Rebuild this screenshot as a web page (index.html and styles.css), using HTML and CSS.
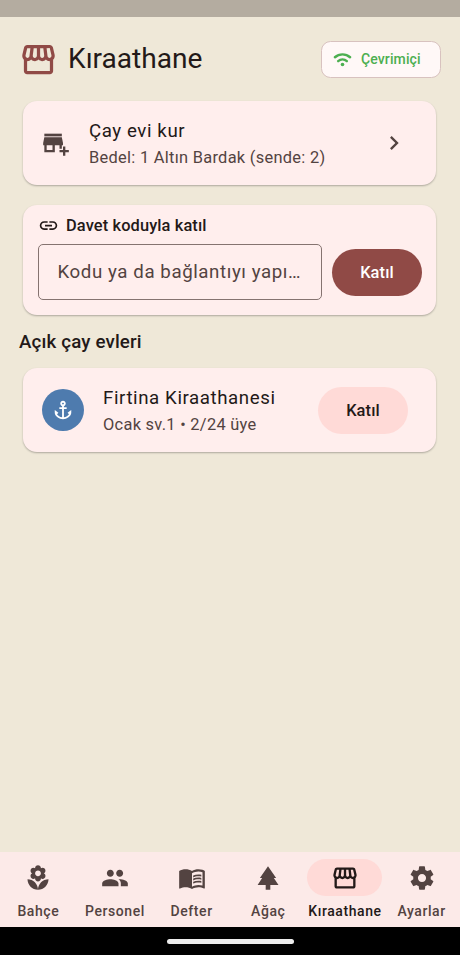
FILE: index.html
```html
<!DOCTYPE html>
<html lang="tr">
<head>
<meta charset="utf-8">
<meta name="viewport" content="width=device-width, initial-scale=1">
<title>Kıraathane</title>
<link rel="stylesheet" href="styles.css">
</head>
<body>
<svg class="defs" width="0" height="0">
  <symbol id="store" viewBox="0 0 24 24"><path d="M21.9 8.89l-1.05-4.37c-.22-.9-1-1.52-1.91-1.52H5.05c-.9 0-1.69.63-1.9 1.52L2.1 8.89c-.24 1.02-.02 2.06.62 2.88.08.11.19.19.28.29V19c0 1.1.9 2 2 2h14c1.1 0 2-.9 2-2v-6.94c.09-.09.2-.18.28-.28.64-.82.87-1.87.62-2.89zm-2.99-3.9l1.05 4.37c.1.42.01.84-.25 1.17-.14.18-.44.47-.94.47-.61 0-1.14-.49-1.21-1.14L16.98 5l1.93-.01zM13 5h1.96l.54 4.52c.05.39-.07.78-.33 1.07-.22.26-.54.41-.95.41-.67 0-1.22-.59-1.22-1.31V5zM8.49 9.52L9.04 5H11v4.69c0 .72-.55 1.31-1.29 1.31-.34 0-.65-.15-.89-.41-.25-.29-.37-.68-.33-1.07zm-4.45-.16L5.05 5h1.97l-.58 4.86c-.08.65-.6 1.14-1.21 1.14-.49 0-.8-.29-.93-.47-.27-.32-.36-.75-.26-1.17zM5 19v-6.03c.08.01.15.03.23.03.87 0 1.66-.36 2.24-.95.6.6 1.4.95 2.31.95.87 0 1.65-.36 2.23-.93.59.57 1.39.93 2.29.93.84 0 1.64-.35 2.24-.95.58.59 1.37.95 2.24.95.08 0 .15-.02.23-.03V19H5z"/></symbol>
</svg>
<div class="status"></div>
<main class="page">
  <header class="header">
    <svg class="header-icon"><use href="#store"/></svg>
    <h1>Kıraathane</h1>
    <div class="chip">
      <svg class="chip-icon" viewBox="0 0 24 24"><path d="M2.400 9.200C7.900 4.300 16.100 4.300 21.600 9.200M6.500 14c3.200-2.700 7.800-2.700 11 0" fill="none" stroke="currentColor" stroke-width="3.100" stroke-linecap="round"/><circle cx="12" cy="18.300" r="2.300"/></svg>
      <span>Çevrimiçi</span>
    </div>
  </header>
  <section class="card tile">
    <svg class="icon" viewBox="0 0 24 24"><path d="M15 17h2v-3h1v-2l-1-5H2l-1 5v2h1v6h9v-6h4v3zm-6 1H4v-4h5v4z"/><path d="M2 4h15v2H2z"/><path d="M2 6h15v1H2z" opacity=".35"/><path d="M20 18v-3h-2v3h-3v2h3v3h2v-3h3v-2z"/></svg>
    <div class="tile-text">
      <div class="title">Çay evi kur</div>
      <div class="subtitle">Bedel: 1 Altın Bardak (sende: 2)</div>
    </div>
    <svg class="icon chevron" viewBox="0 0 24 24"><path d="M10 6L8.590 7.410 13.170 12l-4.580 4.590L10 18l6-6z"/></svg>
  </section>
  <section class="card invite">
    <div class="invite-head">
      <svg class="link-icon" viewBox="0 0 24 24"><path d="M3.900 12c0-1.710 1.390-3.100 3.100-3.100h4V7H7c-2.760 0-5 2.240-5 5s2.240 5 5 5h4v-1.900H7c-1.710 0-3.100-1.390-3.100-3.100zM8 13h8v-2H8v2zm9-6h-4v1.900h4c1.710 0 3.100 1.390 3.100 3.100s-1.390 3.100-3.100 3.100h-4V17h4c2.760 0 5-2.240 5-5s-2.240-5-5-5z"/></svg>
      <span>Davet koduyla katıl</span>
    </div>
    <div class="invite-row">
      <div class="field">Kodu ya da bağlantıyı yapı…</div>
      <button class="btn primary">Katıl</button>
    </div>
  </section>
  <h2>Açık çay evleri</h2>
  <section class="card tile house">
    <div class="avatar"><svg viewBox="0 0 24 24"><path d="M17 15l1.550 1.550c-.96 1.690-3.330 3.040-5.550 3.370V11h3V9h-3V7.820C14.160 7.400 15 6.300 15 5c0-1.650-1.350-3-3-3S9 3.350 9 5c0 1.300.84 2.400 2 2.820V9H8v2h3v8.920c-2.220-.33-4.590-1.680-5.550-3.370L7 15l-4-3v3c0 3.880 4.920 7 9 7s9-3.120 9-7v-3l-4 3zM12 4c.55 0 1 .45 1 1s-.45 1-1 1-1-.45-1-1 .45-1 1-1z"/></svg></div>
    <div class="tile-text">
      <div class="title">Firtina Kiraathanesi</div>
      <div class="subtitle">Ocak sv.1 • 2/24 üye</div>
    </div>
    <button class="btn tonal">Katıl</button>
  </section>
</main>
<nav class="nav">
  <div class="item"><span class="pill"><svg class="icon" viewBox="0 0 24 24"><path d="M12 22c4.970 0 9-4.030 9-9-4.970 0-9 4.030-9 9zM5.600 10.250c0 1.380 1.120 2.500 2.500 2.500.53 0 1.010-.16 1.420-.44l-.02.19c0 1.380 1.120 2.500 2.500 2.500s2.500-1.120 2.500-2.500l-.02-.19c.4.28.89.44 1.420.44 1.380 0 2.500-1.120 2.500-2.500 0-1-.59-1.850-1.430-2.250.84-.4 1.430-1.250 1.430-2.250 0-1.380-1.120-2.500-2.500-2.500-.53 0-1.010.16-1.420.44l.02-.19C14.500 2.120 13.380 1 12 1S9.500 2.120 9.500 3.500l.02.19c-.4-.28-.89-.44-1.420-.44-1.380 0-2.500 1.120-2.500 2.500 0 1 .59 1.850 1.430 2.250-.84.4-1.430 1.250-1.430 2.250zM12 5.500c1.380 0 2.500 1.120 2.500 2.500s-1.120 2.500-2.500 2.500S9.500 9.380 9.500 8s1.120-2.500 2.500-2.500zM3 13c0 4.970 4.030 9 9 9 0-4.970-4.030-9-9-9z"/></svg></span><span>Bahçe</span></div>
  <div class="item"><span class="pill"><svg class="icon" viewBox="0 0 24 24"><path d="M16 11c1.660 0 2.990-1.340 2.990-3S17.660 5 16 5c-1.660 0-3 1.340-3 3s1.340 3 3 3zm-8 0c1.660 0 2.990-1.340 2.990-3S9.660 5 8 5C6.340 5 5 6.340 5 8s1.340 3 3 3zm0 2c-2.330 0-7 1.170-7 3.500V19h14v-2.500c0-2.330-4.670-3.500-7-3.500zm8 0c-.29 0-.62.02-.97.05 1.160.84 1.970 1.970 1.970 3.450V19h6v-2.500c0-2.330-4.670-3.500-7-3.500z"/></svg></span><span>Personel</span></div>
  <div class="item"><span class="pill"><svg class="icon" viewBox="0 0 24 24"><path d="M21 5c-1.110-.35-2.330-.5-3.500-.5-1.950 0-4.050.4-5.500 1.500-1.450-1.100-3.550-1.500-5.500-1.500S2.450 4.900 1 6v14.650c0 .25.25.5.5.5.1 0 .15-.05.25-.05C3.100 20.450 5.050 20 6.500 20c1.950 0 4.050.4 5.500 1.500 1.350-.85 3.800-1.500 5.500-1.500 1.650 0 3.350.3 4.750 1.050.1.05.15.05.25.05.25 0 .5-.25.5-.5V6c-.6-.45-1.250-.75-2-1zm0 13.500c-1.100-.35-2.300-.5-3.500-.5-1.700 0-4.150.65-5.500 1.500V8c1.350-.85 3.800-1.500 5.500-1.500 1.200 0 2.400.15 3.500.5v11.500z"/><path d="M17.500 10.500c.88 0 1.730.09 2.500.26V9.240c-.79-.15-1.640-.24-2.500-.24-1.700 0-3.240.29-4.500.83v1.660c1.130-.64 2.700-.99 4.500-.99zM13 12.490v1.660c1.130-.64 2.700-.99 4.500-.99.88 0 1.730.09 2.500.26V11.900c-.79-.15-1.640-.24-2.500-.24-1.700 0-3.240.3-4.500.83zM17.500 14.330c-1.700 0-3.240.29-4.500.83v1.660c1.130-.64 2.700-.99 4.500-.99.88 0 1.730.09 2.500.26v-1.520c-.79-.16-1.640-.24-2.500-.24z"/></svg></span><span>Defter</span></div>
  <div class="item"><span class="pill"><svg class="icon" viewBox="0 0 24 24"><path d="M17 12h2L12 2 5.050 12H7l-3.900 6h6.920v4h3.960v-4H21z"/></svg></span><span>Ağaç</span></div>
  <div class="item active"><span class="pill"><svg class="icon"><use href="#store"/></svg></span><span>Kıraathane</span></div>
  <div class="item"><span class="pill"><svg class="icon" viewBox="0 0 24 24"><path d="M19.430 12.980c.04-.32.07-.64.07-.98s-.03-.66-.07-.98l2.110-1.650c.19-.15.24-.42.12-.64l-2-3.460c-.12-.22-.39-.3-.61-.22l-2.490 1c-.52-.4-1.080-.73-1.690-.98l-.38-2.650C14.460 2.180 14.250 2 14 2h-4c-.25 0-.46.18-.49.42l-.38 2.650c-.61.25-1.170.59-1.690.98l-2.490-1c-.23-.09-.49 0-.61.22l-2 3.460c-.13.22-.07.49.12.64l2.110 1.650c-.04.32-.07.65-.07.98s.03.66.07.98l-2.110 1.650c-.19.15-.24.42-.12.64l2 3.460c.12.22.39.3.61.22l2.490-1c.52.4 1.080.73 1.690.98l.38 2.650c.03.24.24.42.49.42h4c.25 0 .46-.18.49-.42l.38-2.650c.61-.25 1.170-.59 1.690-.98l2.490 1c.23.09.49 0 .61-.22l2-3.460c.12-.22.07-.49-.12-.64l-2.110-1.650zM12 15.500c-1.930 0-3.500-1.570-3.500-3.500s1.570-3.500 3.500-3.500 3.500 1.570 3.500 3.500-1.570 3.500-3.500 3.500z"/></svg></span><span>Ayarlar</span></div>
</nav>
<div class="gesture"><span></span></div>
</body>
</html>
```
FILE: styles.css
```css
* { box-sizing: border-box; }
body {
  margin: 0;
  height: 955px;
  display: flex;
  flex-direction: column;
  overflow: hidden;
  background: #efe8d8;
  color: #231918;
  font-family: Roboto, "Liberation Sans", sans-serif;
}
.defs { position: absolute; }
svg { fill: currentColor; flex: none; display: block; }
h1, h2 { margin: 0; }
.status { height: 17px; background: #b4aca0; flex: none; }
.page { flex: 1; padding: 24px 19px 0; }
.header { display: flex; align-items: center; height: 36px; }
.header-icon { width: 39px; height: 39px; color: #904a46; }
h1 { flex: 1; margin-left: 10px; font-size: 28.1px; font-weight: 400; line-height: 36px; }
.chip {
  display: flex;
  align-items: center;
  width: 120px;
  height: 37px;
  padding-left: 11px;
  gap: 9px;
  border: 1px solid #d8c2bf;
  border-radius: 9.500px;
  background: #fff8f7;
  color: #4caf50;
  font-size: 14px;
  font-weight: 500;
  letter-spacing: .12px;
}
.chip-icon { width: 19px; height: 19px; }
.card {
  margin: 0 5px 0 4px;
  border-radius: 14px;
  background: #ffeeed;
  box-shadow: 0 1px 2px rgba(0, 0, 0, .28);
}
.tile { display: flex; align-items: center; height: 84px; margin-top: 24px; padding: 0 28px 0 19px; }
.icon { width: 28px; height: 28px; color: #534341; }
.tile-text { flex: 1; margin-left: 19px; }
.title { font-size: 18.700px; letter-spacing: .58px; line-height: 28px; }
.subtitle { margin-bottom: -1px; font-size: 16.400px; letter-spacing: .29px; line-height: 25px; color: #534341; }
.invite { height: 110px; margin-top: 19.500px; padding: 9px 14px 0 15px; }
.invite-head { display: flex; align-items: center; gap: 7px; height: 24px; font-size: 16.400px; font-weight: 500; letter-spacing: .12px; }
.link-icon { width: 21px; height: 21px; }
.invite-row { display: flex; align-items: center; gap: 10px; margin-top: 6.500px; }
.field {
  flex: 1;
  height: 56px;
  padding-left: 18.500px;
  border: 1px solid #857370;
  border-radius: 5px;
  color: #534341;
  font-size: 18.700px;
  letter-spacing: .58px;
  line-height: 54px;
  white-space: nowrap;
}
.btn {
  width: 90px;
  height: 47px;
  padding: 0;
  border: 0;
  border-radius: 24px;
  font: 500 16.400px Roboto, "Liberation Sans", sans-serif;
  letter-spacing: .12px;
}
.primary { background: #904a46; color: #fff; }
.tonal { background: #ffdad7; color: #231918; }
h2 { margin-top: 14.500px; font-size: 18.700px; font-weight: 500; line-height: 27px; letter-spacing: .17px; }
.house { margin-top: 12px; }
.avatar { display: flex; align-items: center; justify-content: center; width: 42px; height: 42px; border-radius: 50%; background: #4e7bae; color: #fff; }
.avatar svg { width: 22px; height: 22px; }
.nav { display: grid; grid-template-columns: repeat(6, 76.660px); height: 75px; flex: none; background: #fceae8; padding-top: 7px; }
.item { display: flex; flex-direction: column; align-items: center; color: #534341; font-size: 14px; font-weight: 500; letter-spacing: .58px; line-height: 19px; }
.pill { display: flex; align-items: center; justify-content: center; width: 75px; height: 37px; margin-bottom: 6px; border-radius: 19px; }
.active, .active .icon { color: #231918; }
.active .pill { background: #ffdad7; }
.gesture { display: flex; align-items: center; justify-content: center; height: 28px; flex: none; background: #000; }
.gesture span { width: 127px; height: 5px; border-radius: 3px; background: #ececec; }
```
